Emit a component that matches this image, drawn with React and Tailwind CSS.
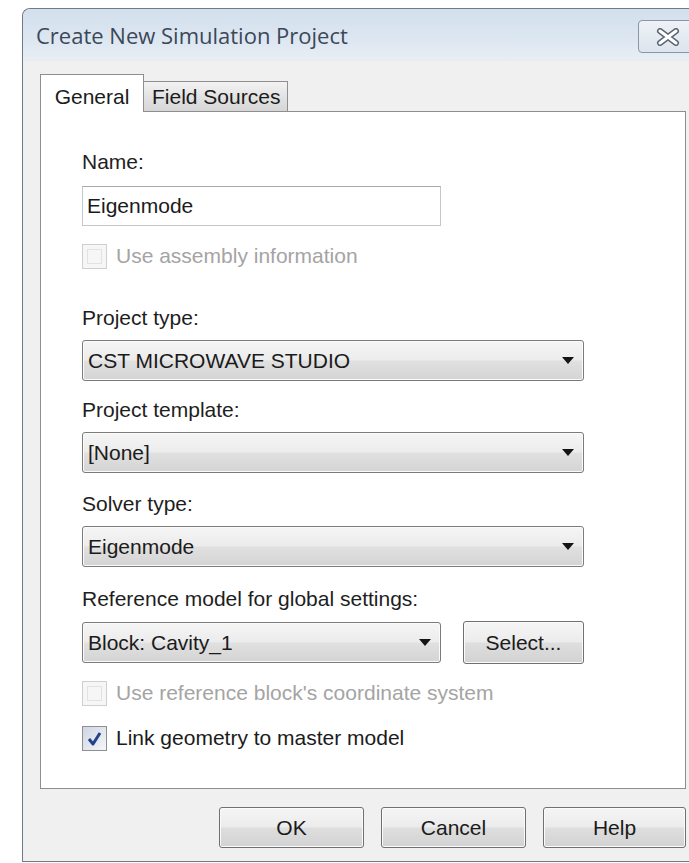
import React from 'react';

// Drop-down arrow used by the combo boxes
const Caret = () => (
  <svg width="12" height="7" viewBox="0 0 12 7" className="shrink-0">
    <path d="M0 0h12L6 7z" fill="#141414" />
  </svg>
);

const Combo = ({ value, className = '' }) => (
  <div
    className={`flex h-[41px] items-center justify-between rounded-[3px] border border-[#7b7b7b] bg-[linear-gradient(to_bottom,#f5f5f5,#ececec_48%,#e0e0e0_52%,#d4d4d4)] pl-[5px] pr-[9px] shadow-[inset_0_0_0_1px_#fbfbfb] ${className}`}
  >
    <span className="text-[#1b1b1b]">{value}</span>
    <Caret />
  </div>
);

const PushButton = ({ label, className = '' }) => (
  <div
    className={`flex h-[41px] items-center justify-center rounded-[3px] border border-[#707070] bg-[linear-gradient(to_bottom,#f5f5f5,#ececec_48%,#dedede_52%,#d2d2d2)] text-[#1b1b1b] shadow-[inset_0_0_0_1px_#fbfbfb] ${className}`}
  >
    {label}
  </div>
);

const Check = ({ label, checked = false, disabled = false, className = '' }) => (
  <div className={`flex h-[24px] items-center ${className}`}>
    <span
      className={`flex h-[25px] w-[25px] items-center justify-center border ${
        disabled
          ? 'border-[#cfcfcf] bg-[#f6f6f6]'
          : 'border-[#8e8f8f] bg-[linear-gradient(135deg,#cfd6e2,#f4f6f9)]'
      }`}
    >
      {disabled && <span className="h-[15px] w-[15px] border border-[#e2e2e2]" />}
      {checked && (
        <svg width="17" height="17" viewBox="0 0 17 17">
          <path d="M3 9l4 5 7-11" fill="none" stroke="#24418a" strokeWidth="3" strokeLinejoin="round" />
        </svg>
      )}
    </span>
    <span className={`ml-[9px] ${disabled ? 'text-[#a4a4a4]' : 'text-[#1b1b1b]'}`}>{label}</span>
  </div>
);

const Label = ({ children, className = '' }) => (
  <div className={`h-[24px] leading-[24px] text-[#1e1e1e] ${className}`}>{children}</div>
);

export default function App() {
  return (
    <div className="h-[863px] w-[689px] overflow-hidden bg-white pl-[22px] pt-[8px] font-['Liberation_Sans',Arial,sans-serif] text-[21px]">
      <div className="h-[854px] w-[680px] rounded-tl-[8px] border-l border-t border-b border-[#6f7b88] bg-[#f0f0f0]">
        {/* title bar */}
        <div className="flex h-[52px] items-start rounded-tl-[8px] bg-[linear-gradient(to_bottom,#d3dfed,#dde7f2_60%,#e9eef4)]">
          <div className="pl-[13px] pt-[11px] font-['Open_Sans',sans-serif] text-[22px] leading-[30px] text-[#3c4858]">
            Create New Simulation Project
          </div>
          <div className="ml-auto mr-[4px] mt-[11px] flex h-[33px] w-[60px] items-center justify-center rounded-[4px] border border-[#8b96a4] bg-[linear-gradient(to_bottom,#eef2f7,#dde4ed)]">
            <svg width="24" height="18" viewBox="0 0 24 18">
              <path d="M4 3l16 12M20 3L4 15" stroke="#5d6674" strokeWidth="6" strokeLinecap="round" />
              <path d="M4 3l16 12M20 3L4 15" stroke="#ffffff" strokeWidth="3" strokeLinecap="round" />
            </svg>
          </div>
        </div>

        <div className="pl-[17px]">
          {/* tabs */}
          <div className="mt-[13px] flex items-end">
            <div className="relative z-10 -mb-px flex h-[38px] w-[104px] justify-center border-l border-r border-t border-[#8e8e8e] bg-white pt-[6px] text-[#1b1b1b]">
              General
            </div>
            <div className="flex h-[30px] w-[144px] items-center border-r border-t border-[#8e8e8e] bg-[linear-gradient(to_bottom,#f3f3f3,#e3e3e3_50%,#d6d6d6)] pl-[8px] text-[#1b1b1b]">
              Field Sources
            </div>
          </div>

          {/* General page */}
          <div className="flex h-[678px] w-[646px] flex-col border border-[#8e8e8e] bg-white pl-[41px]">
            <Label className="mt-[38px]">Name:</Label>
            <div className="mt-[12px] flex h-[40px] w-[359px] items-center border border-[#c3c6cb] border-t-[#a6a9af] pl-[4px] text-[#1b1b1b]">
              Eigenmode
            </div>
            <Check className="mt-[18px]" label="Use assembly information" disabled />

            <Label className="mt-[38px]">Project type:</Label>
            <Combo className="mt-[10px] w-[502px]" value="CST MICROWAVE STUDIO" />

            <Label className="mt-[17px]">Project template:</Label>
            <Combo className="mt-[10px] w-[502px]" value="[None]" />

            <Label className="mt-[19px]">Solver type:</Label>
            <Combo className="mt-[10px] w-[502px]" value="Eigenmode" />

            <Label className="mt-[20px]">Reference model for global settings:</Label>
            <div className="mt-[10px] flex w-[502px] items-center justify-between">
              <Combo className="w-[359px]" value="Block: Cavity_1" />
              <PushButton className="h-[43px] w-[121px]" label="Select..." />
            </div>

            <Check className="mt-[17px]" label="Use reference block's coordinate system" disabled />
            <Check className="mt-[21px]" label="Link geometry to master model" checked />
          </div>

          {/* dialog buttons */}
          <div className="mt-[18px] flex w-[646px] justify-end gap-[17px]">
            <PushButton className="w-[145px]" label="OK" />
            <PushButton className="w-[145px]" label="Cancel" />
            <PushButton className="w-[143px]" label="Help" />
          </div>
        </div>
      </div>
    </div>
  );
}
